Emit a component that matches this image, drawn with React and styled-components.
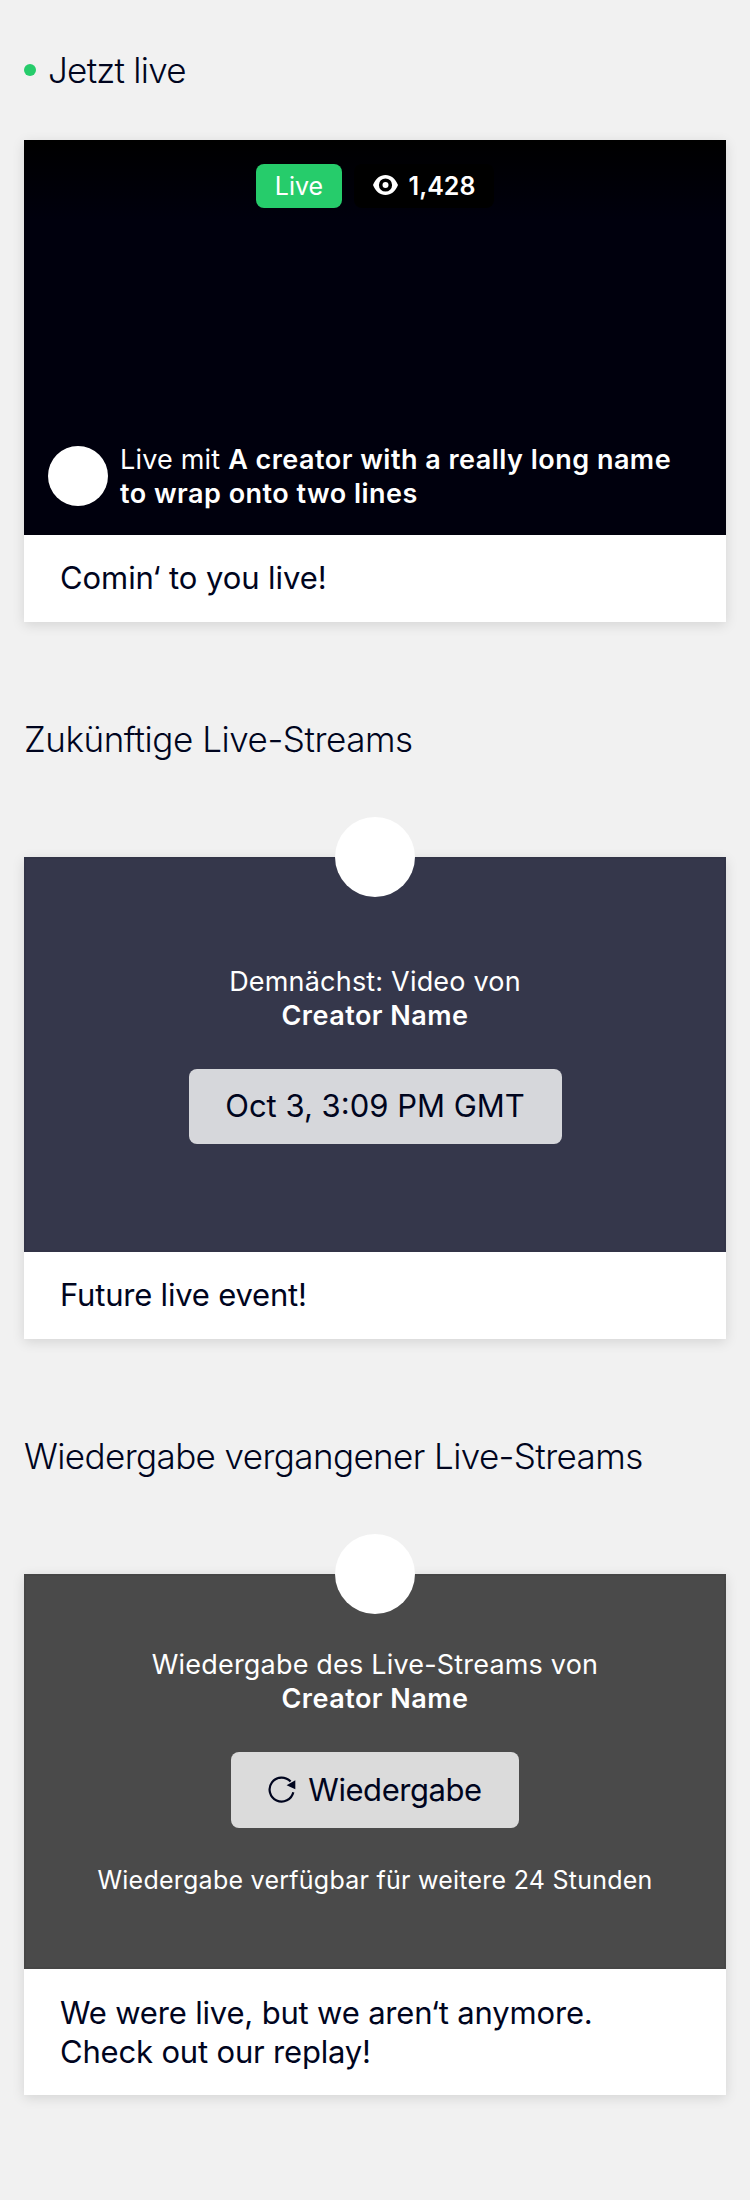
import React from "react";
import styled, { createGlobalStyle } from "styled-components";

const GlobalStyle = createGlobalStyle`
  *, *::before, *::after { box-sizing: border-box; }
  body {
    margin: 0;
    background: #f1f1f1;
    color: #00051e;
    font-family: Inter, "Liberation Sans", sans-serif;
  }
`;

const Page = styled.main`
  min-height: 2200px;
  padding: 49px 24px 0;
  display: flex;
  flex-direction: column;
  gap: 96px;
`;

const Section = styled.section`
  display: flex;
  flex-direction: column;
  gap: ${(p) => p.$gap || 97}px;
`;

const Heading = styled.h2`
  margin: 0;
  display: flex;
  align-items: center;
  gap: 12px;
  font-size: 35px;
  line-height: 42px;
  font-weight: 300;
  letter-spacing: ${(p) => p.$spacing || 0}px;
  white-space: nowrap;
`;

const LiveDot = styled.span`
  width: 12px;
  height: 12px;
  border-radius: 50%;
  background: #26cc6b;
`;

const Card = styled.article`
  background: #fff;
  box-shadow: 0 3px 12px rgba(0, 0, 0, 0.12);
`;

const Media = styled.div`
  position: relative;
  height: 395px;
  display: flex;
  flex-direction: column;
  align-items: center;
  color: #fff;
  background: ${(p) => p.$background};
  box-shadow: inset 0 0 0 2px rgba(0, 0, 0, 0.05);
`;

const LiveMedia = styled(Media)`
  justify-content: space-between;
  padding: 24px;
`;

const Badges = styled.div`
  display: flex;
  gap: 12px;
`;

const Badge = styled.span`
  display: flex;
  align-items: center;
  justify-content: center;
  gap: 11px;
  width: ${(p) => p.$width}px;
  height: 44px;
  border-radius: 8px;
  background: ${(p) => p.$background};
  font-size: 25px;
  line-height: 30px;
  font-weight: ${(p) => p.$weight || 400};
`;

const Host = styled.div`
  align-self: stretch;
  display: flex;
  align-items: center;
  gap: 12px;
`;

const Avatar = styled.span`
  flex: none;
  width: 60px;
  height: 60px;
  margin-bottom: 2px;
  border-radius: 50%;
  background: #fff;
`;

const TopAvatar = styled(Avatar)`
  position: absolute;
  top: -40px;
  left: 50%;
  width: 80px;
  height: 80px;
  margin: 0;
  transform: translateX(-50%);
`;

const Lead = styled.p`
  margin: ${(p) => p.$top || 0}px 0 0;
  font-size: 27px;
  line-height: 34px;
  letter-spacing: 0.19px;
  text-align: ${(p) => p.$align || "center"};
  white-space: nowrap;
`;

const Name = styled.strong`
  font-weight: 600;
  letter-spacing: 0.48px;
`;

const ActionButton = styled.button`
  display: flex;
  align-items: center;
  justify-content: center;
  gap: 12px;
  margin: 36px 0 0;
  padding: 0 0 2px;
  width: ${(p) => p.$width}px;
  height: ${(p) => p.$height}px;
  border: 0;
  border-radius: 8px;
  background: rgba(255, 255, 255, 0.8);
  color: #00051e;
  font: inherit;
  font-size: 31px;
  line-height: 39px;
  letter-spacing: ${(p) => p.$spacing || 0}px;
  white-space: nowrap;
`;

const Availability = styled.p`
  margin: 36px 0 0;
  font-size: 25px;
  line-height: 32px;
  letter-spacing: 0.25px;
  white-space: nowrap;
`;

const Caption = styled.p`
  margin: 0;
  padding: ${(p) => p.$padding || "23px 36px 25px"};
  font-size: 31px;
  line-height: 39px;
  letter-spacing: ${(p) => p.$spacing || 0}px;
`;

const EyeSvg = styled.svg`
  margin-bottom: 2px;
`;

const ReplaySvg = styled.svg`
  margin-top: 2px;
`;

const EyeIcon = () => (
  <EyeSvg width="25" height="20" viewBox="0 0 25 20" aria-hidden="true">
    <path
      fill="#fff"
      fillRule="evenodd"
      d="M12.500 0C7 0 2.600 3.600 0 10c2.600 6.400 7 10 12.500 10S22.400 16.400 25 10C22.400 3.600 18 0 12.500 0zm0 3.400a6.600 6.600 0 1 1 0 13.200 6.600 6.600 0 0 1 0-13.200z"
    />
    <circle cx="12.500" cy="10" r="3" fill="#fff" />
  </EyeSvg>
);

const ReplayIcon = () => (
  <ReplaySvg width="28" height="28" viewBox="0 0 28 28" fill="none" aria-hidden="true">
    <path d="M25.300 16.200A12 12 0 1 1 22.600 5.600" stroke="#00051e" strokeWidth="2.200" />
    <path d="M27.300 4.300V13.300L18.600 9.200z" fill="#00051e" />
  </ReplaySvg>
);

export default function App() {
  return (
    <>
      <GlobalStyle />
      <Page>
        <Section $gap={49}>
          <Heading $spacing={-0.75}>
            <LiveDot />
            Jetzt live
          </Heading>
          <Card>
            <LiveMedia $background="linear-gradient(#000 0, #00000d 80px)">
              <Badges>
                <Badge $width={86} $background="#26cc6b">Live</Badge>
                <Badge $width={140} $background="#000" $weight={600}>
                  <EyeIcon />
                  1,428
                </Badge>
              </Badges>
              <Host>
                <Avatar />
                <Lead $align="left">
                  Live mit <Name>A creator with a really long name<br />to wrap onto two lines</Name>
                </Lead>
              </Host>
            </LiveMedia>
            <Caption $spacing={-0.08}>Comin‘ to you live!</Caption>
          </Card>
        </Section>

        <Section>
          <Heading $spacing={-0.45}>Zukünftige Live-Streams</Heading>
          <Card>
            <Media $background="#35374b">
              <TopAvatar />
              <Lead $top={108}>
                Demnächst: Video von<br /><Name>Creator Name</Name>
              </Lead>
              <ActionButton $width={373} $height={75}>Oct 3, 3:09 PM GMT</ActionButton>
            </Media>
            <Caption $spacing={-0.2}>Future live event!</Caption>
          </Card>
        </Section>

        <Section>
          <Heading $spacing={-0.6}>Wiedergabe vergangener Live-Streams</Heading>
          <Card>
            <Media $background="#4a4a4a">
              <TopAvatar />
              <Lead $top={74}>
                Wiedergabe des Live-Streams von<br /><Name>Creator Name</Name>
              </Lead>
              <ActionButton $width={288} $height={76} $spacing={-0.45}>
                <ReplayIcon />
                Wiedergabe
              </ActionButton>
              <Availability>Wiedergabe verfügbar für weitere 24 Stunden</Availability>
            </Media>
            <Caption $spacing={-0.18} $padding="24px 36px 24px">
              We were live, but we aren‘t anymore.<br />Check out our replay!
            </Caption>
          </Card>
        </Section>
      </Page>
    </>
  );
}
